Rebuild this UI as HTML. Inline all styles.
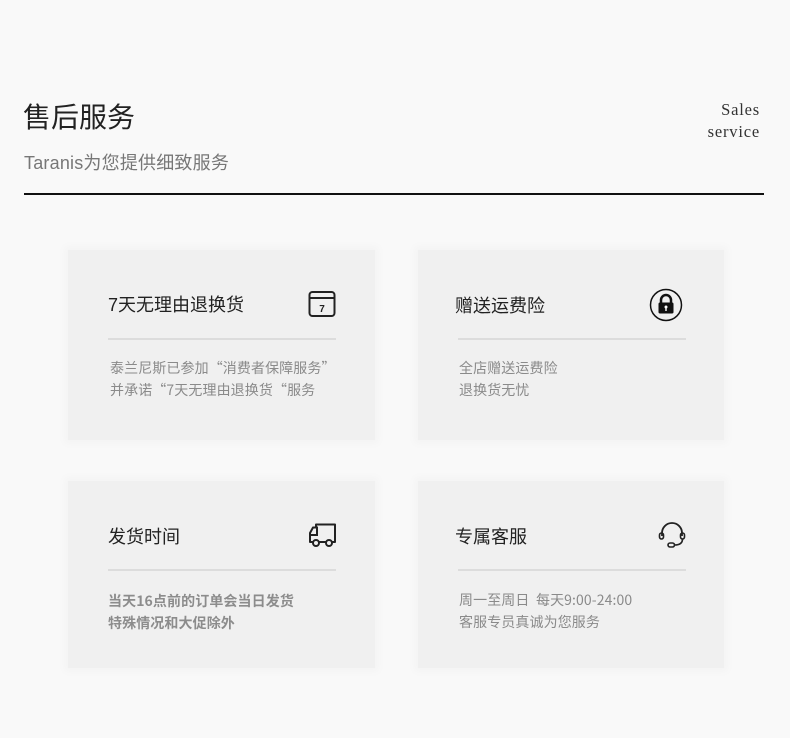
<!DOCTYPE html>
<html><head><meta charset="utf-8"><style>
*{margin:0;padding:0;box-sizing:border-box}
body{width:790px;height:738px;background:#f9f9f9;position:relative;overflow:hidden;font-family:"Liberation Sans","Noto Sans CJK SC",sans-serif}
.a{position:absolute;white-space:nowrap}
.card{position:absolute;background:#f0f0f0;box-shadow:0 0 8px 4px rgba(0,0,0,0.025)}
.t{font-size:18px;color:#222}
.d{position:absolute;height:2px;background:#dcdcdc;width:228px}
.p{font-size:14px;letter-spacing:0.1px;color:#8a8a8a;line-height:22px;font-family:"Noto Sans CJK SC","Liberation Sans",sans-serif}
</style></head><body>
<div class="a" style="left:23px;top:96px;font-size:28px;color:#222">售后服务</div>
<div class="a" style="left:24px;top:149px;font-size:18px;color:#777;letter-spacing:0.2px">Taranis为您提供细致服务</div>
<div class="a" style="right:30px;top:99px;font-family:'Liberation Serif','Noto Serif CJK SC',serif;font-size:16.5px;letter-spacing:0.8px;color:#333;text-align:right;line-height:22px">Sales<br>service</div>
<div class="a" style="left:24px;top:193px;width:740px;height:1.5px;background:#111"></div>

<div class="card" style="left:68px;top:250px;width:307px;height:190px"></div>
<div class="card" style="left:418px;top:250px;width:306px;height:190px"></div>
<div class="card" style="left:68px;top:481px;width:307px;height:187px"></div>
<div class="card" style="left:418px;top:481px;width:306px;height:187px"></div>

<div class="a t" style="left:108px;top:291px">7天无理由退换货</div>
<svg class="a" style="left:308px;top:290px" width="28" height="28" viewBox="0 0 28 28"><rect x="1.5" y="2" width="25" height="24" rx="3" fill="none" stroke="#222" stroke-width="2"/><line x1="1.5" y1="8" x2="26.5" y2="8" stroke="#222" stroke-width="2"/><text x="14" y="22" font-size="10" font-weight="bold" text-anchor="middle" fill="#222" font-family="Liberation Sans">7</text></svg>
<div class="d" style="left:108px;top:338px"></div>
<div class="a p" style="left:110px;top:357px">泰兰尼斯已参加“消费者保障服务”<br>并承诺“7天无理由退换货“服务</div>

<div class="a t" style="left:455px;top:292px">赠送运费险</div>
<svg class="a" style="left:649px;top:288px" width="34" height="34" viewBox="0 0 34 34"><circle cx="17" cy="17" r="15.5" fill="none" stroke="#111" stroke-width="1.5"/><path d="M12 15v-3a5 5 0 0 1 10 0v3" fill="none" stroke="#111" stroke-width="2.5"/><rect x="9.5" y="14.5" width="15" height="11" rx="1.5" fill="#111"/><circle cx="17" cy="19" r="1.5" fill="#fff"/><rect x="16.3" y="19" width="1.4" height="4" fill="#fff"/></svg>
<div class="d" style="left:458px;top:338px"></div>
<div class="a p" style="left:459px;top:357px">全店赠送运费险<br>退换货无忧</div>

<div class="a t" style="left:108px;top:523px">发货时间</div>
<svg class="a" style="left:308px;top:522px" width="29" height="27" viewBox="0 0 29 27"><path d="M8 5.5v-3h19v17.5H2V11l3-5.5h5" fill="none" stroke="#222" stroke-width="2" stroke-linejoin="round"/><path d="M2 13h7V6" fill="none" stroke="#222" stroke-width="2"/><circle cx="8" cy="21" r="3" fill="#f0f0f0" stroke="#222" stroke-width="2"/><circle cx="21" cy="21" r="3" fill="#f0f0f0" stroke="#222" stroke-width="2"/></svg>
<div class="d" style="left:108px;top:569px"></div>
<div class="a p" style="left:108px;top:590px;font-weight:bold;color:#8c8c8c">当天16点前的订单会当日发货<br>特殊情况和大促除外</div>

<div class="a t" style="left:455px;top:523px">专属客服</div>
<svg class="a" style="left:657px;top:520px" width="30" height="30" viewBox="0 0 30 30"><path d="M5 16v-3a10 10 0 0 1 20 0v3" fill="none" stroke="#222" stroke-width="1.8"/><rect x="2.5" y="13" width="4" height="6" rx="2" fill="none" stroke="#222" stroke-width="1.6"/><rect x="23.5" y="13" width="4" height="6" rx="2" fill="none" stroke="#222" stroke-width="1.6"/><path d="M25.5 19c0 4-3 6-8 6" fill="none" stroke="#222" stroke-width="1.6"/><rect x="11" y="23" width="6.5" height="4" rx="2" fill="none" stroke="#222" stroke-width="1.6"/></svg>
<div class="d" style="left:458px;top:569px"></div>
<div class="a p" style="left:459px;top:589px">周一至周日&nbsp; 每天9:00-24:00<br>客服专员真诚为您服务</div>
</body></html>
